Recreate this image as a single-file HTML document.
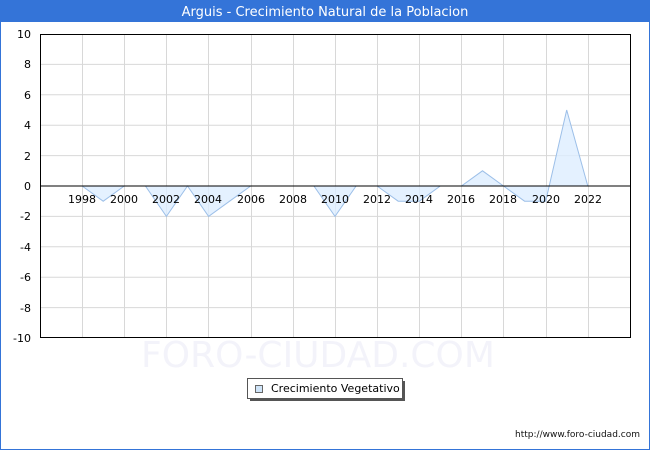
<!DOCTYPE html>
<html><head><style>body{margin:0;background:#fff}svg{display:block}</style></head><body>
<svg width="650" height="450" xmlns="http://www.w3.org/2000/svg" font-family="'DejaVu Sans','Liberation Sans',sans-serif">
<rect x="0.5" y="0.5" width="649" height="449" fill="#fff" stroke="#3474d8"/>
<rect x="0" y="0" width="650" height="22" fill="#3474d8"/>
<text x="325" y="16" text-anchor="middle" fill="#fff" font-size="13">Arguis - Crecimiento Natural de la Poblacion</text>
<g stroke="#d8d8d8" stroke-width="1">
<line x1="40" x2="630" y1="64.4" y2="64.4"/><line x1="40" x2="630" y1="94.8" y2="94.8"/>
<line x1="40" x2="630" y1="125.2" y2="125.2"/><line x1="40" x2="630" y1="155.6" y2="155.6"/>
<line x1="40" x2="630" y1="216.4" y2="216.4"/><line x1="40" x2="630" y1="246.8" y2="246.8"/>
<line x1="40" x2="630" y1="277.2" y2="277.2"/><line x1="40" x2="630" y1="307.6" y2="307.6"/>
<line x1="82.5" x2="82.5" y1="34" y2="338"/><line x1="124.5" x2="124.5" y1="34" y2="338"/>
<line x1="166.5" x2="166.5" y1="34" y2="338"/><line x1="208.5" x2="208.5" y1="34" y2="338"/>
<line x1="251.5" x2="251.5" y1="34" y2="338"/><line x1="293.5" x2="293.5" y1="34" y2="338"/>
<line x1="335.5" x2="335.5" y1="34" y2="338"/><line x1="377.5" x2="377.5" y1="34" y2="338"/>
<line x1="419.5" x2="419.5" y1="34" y2="338"/><line x1="461.5" x2="461.5" y1="34" y2="338"/>
<line x1="503.5" x2="503.5" y1="34" y2="338"/><line x1="546.5" x2="546.5" y1="34" y2="338"/>
<line x1="588.5" x2="588.5" y1="34" y2="338"/>
</g>
<text x="318" y="367" text-anchor="middle" font-size="36" fill="#f3f3fa">FORO-CIUDAD.COM</text>
<polygon fill="#ddeeff" fill-opacity="0.8" stroke="#9cbfe8" stroke-width="1" points="82.1,186 103.2,201.2 124.3,186 145.4,186 166.4,216.4 187.5,186 208.6,216.4 229.6,201.2 250.7,186 313.9,186 335,216.4 356.1,186 377.1,186 398.2,201.2 419.3,201.2 440.3,186 461.4,186 482.5,170.8 503.5,186 524.6,201.2 545.7,201.2 566.7,110 587.8,186"/>
<line x1="40" x2="630" y1="186" y2="186" stroke="#000"/>
<rect x="40.5" y="34.5" width="590" height="303" fill="none" stroke="#000"/>
<g font-size="11" fill="#000" text-anchor="end">
<text x="31" y="38">10</text><text x="31" y="68">8</text><text x="31" y="99">6</text>
<text x="31" y="129">4</text><text x="31" y="160">2</text><text x="31" y="190">0</text>
<text x="31" y="220">-2</text><text x="31" y="251">-4</text><text x="31" y="281">-6</text>
<text x="31" y="312">-8</text><text x="31" y="342">-10</text>
</g>
<g font-size="11" fill="#000" text-anchor="middle">
<text x="82" y="203">1998</text><text x="124" y="203">2000</text><text x="166" y="203">2002</text>
<text x="208" y="203">2004</text><text x="251" y="203">2006</text><text x="293" y="203">2008</text>
<text x="335" y="203">2010</text><text x="377" y="203">2012</text><text x="419" y="203">2014</text>
<text x="461" y="203">2016</text><text x="503" y="203">2018</text><text x="546" y="203">2020</text>
<text x="588" y="203">2022</text>
</g>
<rect x="250" y="381" width="155" height="20" fill="#555"/>
<rect x="247.5" y="378.5" width="155" height="20" fill="#fff" stroke="#555"/>
<rect x="255.5" y="385.5" width="7" height="7" fill="#cfe4f8" stroke="#666"/>
<text x="271" y="392" font-size="11" fill="#000">Crecimiento Vegetativo</text>
<text x="640" y="437" font-size="9" fill="#111" text-anchor="end">http://www.foro-ciudad.com</text>
</svg>
</body></html>
